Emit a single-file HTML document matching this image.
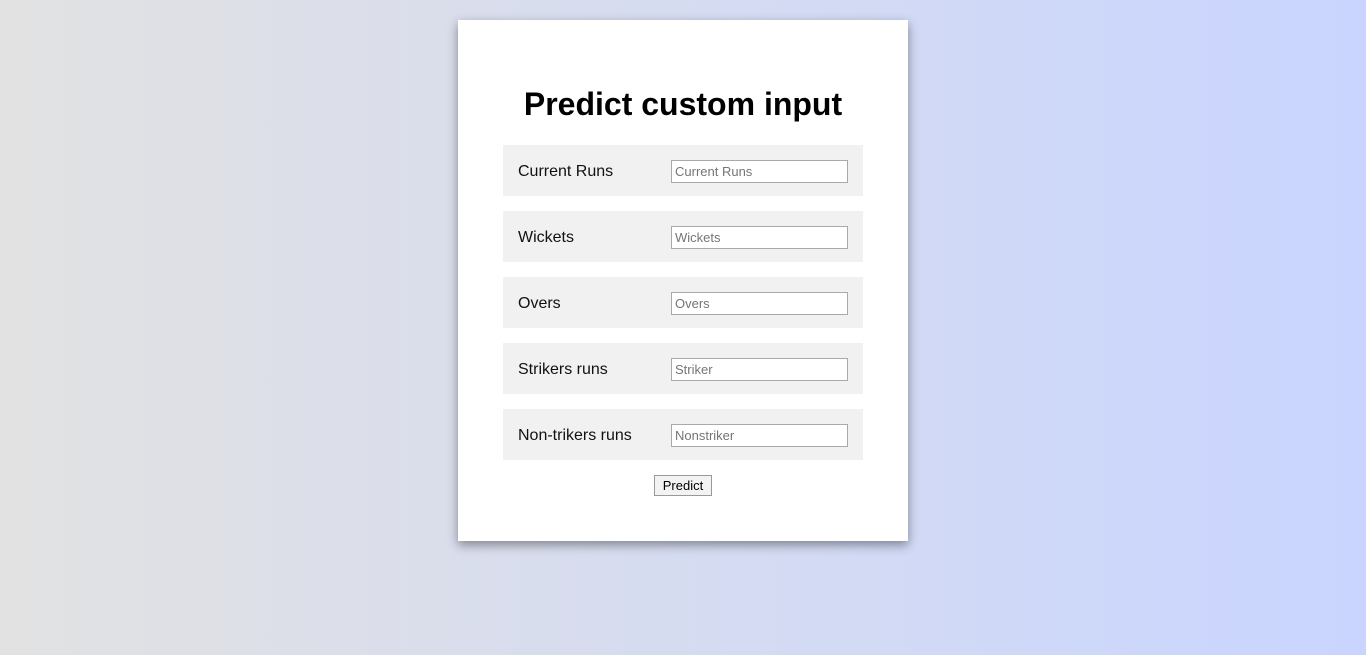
<!DOCTYPE html>
<html><head><style>
*{margin:0;padding:0;box-sizing:border-box}
body{width:1366px;height:655px;background:linear-gradient(to right,#e2e2e2,#c9d5ff);font-family:"Liberation Sans",sans-serif;position:relative;overflow:hidden}
.card{position:absolute;left:458px;top:20px;width:450px;height:521px;background:#fff;box-shadow:0 4px 10px rgba(0,0,0,.4)}
h1{position:absolute;top:66px;left:0;width:100%;text-align:center;font-size:32px;font-weight:bold;color:#000}
.row{position:absolute;left:45px;width:360px;height:51px;background:#f1f1f1}
.row span{position:absolute;left:15px;top:18px;font-size:16px;color:#111}
.row div{position:absolute;left:168px;top:15px;width:177px;height:23px;border:1px solid #a9a9a9;background:#fff;font-size:13px;color:#757575;padding:3px 0 0 3px}
.btn{position:absolute;left:196px;top:455px;width:58px;height:21px;border:1px solid #999;background:#f3f3f3;font-size:13px;text-align:center;line-height:19px;color:#000}
</style></head><body>
<div class="card">
<h1>Predict custom input</h1>
<div class="row" style="top:125px"><span>Current Runs</span><div>Current Runs</div></div>
<div class="row" style="top:191px"><span>Wickets</span><div>Wickets</div></div>
<div class="row" style="top:257px"><span>Overs</span><div>Overs</div></div>
<div class="row" style="top:323px"><span>Strikers runs</span><div>Striker</div></div>
<div class="row" style="top:389px"><span>Non-trikers runs</span><div>Nonstriker</div></div>
<div class="btn">Predict</div>
</div>
</body></html>
